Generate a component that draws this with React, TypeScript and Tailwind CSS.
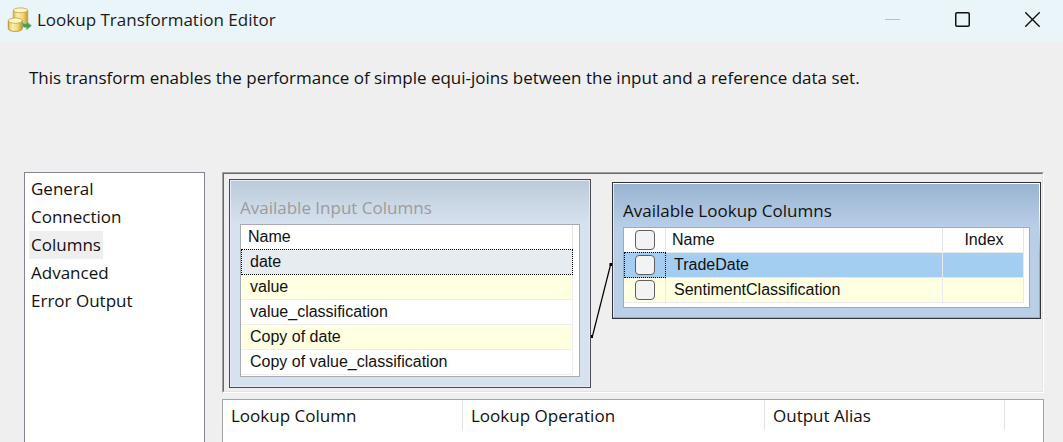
import React, { useState } from "react";

const pages = ["General", "Connection", "Columns", "Advanced", "Error Output"];
const inputColumns = ["date", "value", "value_classification", "Copy of date", "Copy of value_classification"];
const lookupColumns = ["TradeDate", "SentimentClassification"];

function DatabaseIcon() {
  return (
    <svg width="26" height="26" viewBox="0 0 26 26" aria-hidden="true" className="shrink-0">
      <defs>
        <linearGradient id="gold" x1="0" x2="1" y1="0" y2="0">
          <stop offset="0" stopColor="#e0b94c" />
          <stop offset="0.300" stopColor="#fbf0a8" />
          <stop offset="0.650" stopColor="#f3da72" />
          <stop offset="1" stopColor="#c9982f" />
        </linearGradient>
      </defs>
      <path d="M6.300 3.300v12c0 1.500 3 2.500 7.200 2.500s7.200-1 7.200-2.500v-12z" fill="url(#gold)" stroke="#b99545" strokeWidth="0.800" />
      <ellipse cx="13.500" cy="3.300" rx="7.200" ry="2.400" fill="#fcf5c4" stroke="#c4a04a" strokeWidth="0.800" />
      <path d="M1.300 13.600v8c0 1.700 3 2.800 7 2.800s7-1.100 7-2.800v-8z" fill="url(#gold)" stroke="#a97f2c" strokeWidth="0.800" />
      <ellipse cx="8.300" cy="13.600" rx="7" ry="2.700" fill="#fcf5c4" stroke="#c4a04a" strokeWidth="0.800" />
      <path d="M14.800 14.500c1 1.800 2.500 2.400 4.500 2.200v-2.500l5.400 4.600-5.400 4.300v-2.500c-3.500.3-5-2.200-4.500-6.100z" fill="#4f9d51" stroke="#a3cfa0" strokeWidth="0.600" />
    </svg>
  );
}

function TitleBar() {
  return (
    <header className="flex h-[42px] shrink-0 items-center bg-[#eaf5f9] pb-[3px] pl-[7px]">
      <DatabaseIcon />
      <h1 className="ml-1 flex-1 text-[17px] leading-6 text-[#1a1a1a]">Lookup Transformation Editor</h1>
      <div className="flex h-full items-center gap-[55px] pr-[23px]">
        <button aria-label="Minimize" disabled>
          <svg width="15" height="15" viewBox="0 0 15 15"><path d="M0 7.500h15" stroke="#b9c0c3" /></svg>
        </button>
        <button aria-label="Maximize">
          <svg width="15" height="15" viewBox="0 0 15 15" fill="none"><rect x="0.750" y="0.750" width="13.500" height="13.500" rx="1.200" stroke="#111" strokeWidth="1.500" /></svg>
        </button>
        <button aria-label="Close">
          <svg width="15" height="15" viewBox="0 0 15 15"><path d="M0.300 0.300l14.400 14.400M14.700 0.300L0.300 14.700" stroke="#111" strokeWidth="1.400" /></svg>
        </button>
      </div>
    </header>
  );
}

function CheckBox({ label }: { label: string }) {
  return (
    <input
      type="checkbox"
      aria-label={label}
      className="mx-auto block size-5 appearance-none rounded-[4px] border border-[#5f5f5f] bg-[#f3f3f3] checked:bg-[#0067c0]"
    />
  );
}

function InputColumns() {
  return (
    <section className="w-[362px] shrink-0 self-start border border-[#4a4a50] bg-[#d7e2f0]">
      <div className="border border-[#e6eaf6] bg-linear-to-b from-[#bccbda] to-[#d7e2f0] to-[44px] px-[9px] pt-[15px] pb-[9px]">
        <h2 className="h-[28px] text-[17px] leading-6 text-[#9c9c9c]">Available Input Columns</h2>
        <div className="border border-[#a9abb3] bg-white pr-[6px] pb-[1px]">
          <table className="w-full table-fixed border-separate border-spacing-0 font-['Liberation_Sans',Arial,sans-serif] text-[16px] leading-5">
            <thead>
              <tr>
                <th className="h-6 border-r border-[#e2e2e2] p-0 pl-[7px] text-left font-normal">Name</th>
              </tr>
            </thead>
            <tbody>
              {inputColumns.map((name, i) => (
                <tr key={name} className={i === 0 ? "bg-[#e6ecf0]" : i % 2 ? "bg-[#ffffe1]" : "bg-white"}>
                  <td className={i === 0 ? "h-[26px] border border-dotted border-black p-0 pl-2" : "h-[25px] border-r border-b border-[#eeeeee] p-0 pl-[9px]"}>
                    {name}
                  </td>
                </tr>
              ))}
            </tbody>
          </table>
        </div>
      </div>
    </section>
  );
}

function LookupColumns() {
  return (
    <section className="mt-[3px] mr-[1px] min-w-0 flex-1 self-start border border-[#333338] bg-linear-to-b from-white from-[25px] to-[#4ccdf0] to-[70px] pt-px pr-px pb-px">
      <div className="border-l border-[#dfe8f5] bg-linear-to-b from-[#9ab4d1] to-[#b9cfe8] to-[44px] px-[9px] pt-[15px] pb-[9px]">
        <h2 className="h-[28px] text-[17px] leading-6 text-[#111]">Available Lookup Columns</h2>
        <div className="border border-[#a3a9b5] bg-white pr-[5px] pb-[4px]">
          <table className="w-full table-fixed border-separate border-spacing-0 font-['Liberation_Sans',Arial,sans-serif] text-[16px] leading-5">
            <colgroup>
              <col className="w-[42px]" />
              <col />
              <col className="w-[81px]" />
            </colgroup>
            <thead>
              <tr>
                <th className="h-6 border-r border-[#e6e6e6] p-0"><CheckBox label="Select all lookup columns" /></th>
                <th className="border-r border-[#e6e6e6] p-0 pl-[6px] text-left font-normal">Name</th>
                <th className="border-r border-[#e6e6e6] p-0 pl-[2px] text-center font-normal">Index</th>
              </tr>
            </thead>
            <tbody>
              {lookupColumns.map((name, i) => (
                <tr key={name} className={i === 0 ? "bg-[#a3cef1]" : "bg-[#ffffe1]"}>
                  <td className={i === 0 ? "h-[26px] border border-dotted border-black p-0" : "h-[25px] border-r border-b border-[#e9e9e9] p-0"}>
                    <CheckBox label={name} />
                  </td>
                  <td className={i === 0 ? "border-y border-r border-[#e9e9e9] p-0 pl-2" : "border-r border-b border-[#e9e9e9] p-0 pl-2"}>{name}</td>
                  <td className={i === 0 ? "border-y border-r border-[#e9e9e9] p-0" : "border-r border-b border-[#e9e9e9] p-0"} />
                </tr>
              ))}
            </tbody>
          </table>
        </div>
      </div>
    </section>
  );
}

export default function App() {
  const [page, setPage] = useState("Columns");
  return (
    <div className="flex h-screen flex-col overflow-hidden bg-[#efefef] font-['Open_Sans','Segoe_UI',sans-serif] text-[17px] text-[#111]">
      <TitleBar />
      <p className="h-[130px] shrink-0 pt-6 pr-5 pl-[29px] leading-6">
        This transform enables the performance of simple equi-joins between the input and a reference data set.
      </p>
      <div className="flex min-h-0 flex-1 pr-[19px] pl-6">
        <nav className="mr-[17px] flex w-[181px] shrink-0 flex-col items-start border border-b-0 border-[#828790] bg-white pt-[2px] pl-1">
          {pages.map((name) => (
            <button
              key={name}
              onClick={() => setPage(name)}
              className={name === page ? "h-7 bg-[#efefef] px-[2px] text-left" : "h-7 px-[2px] text-left"}
            >
              {name}
            </button>
          ))}
        </nav>
        <main className="flex min-w-0 flex-1 flex-col">
          <div className="h-[221px] shrink-0 border border-t-[#a0a0a0] border-r-white border-b-white border-l-[#a0a0a0]">
            <div className="flex h-full border border-t-[#696969] border-r-[#e3e3e3] border-b-[#e3e3e3] border-l-[#696969] pt-[5px] pl-[5px]">
              <InputColumns />
              <svg width="21" height="209" viewBox="0 0 21 209" className="shrink-0" aria-hidden="true">
                <path d="M1.500 157L19.500 86" stroke="#000" strokeWidth="1.200" />
                <path d="M0 156h2v3H0zM18.500 84h2.500v3h-2.500z" fill="#000" />
              </svg>
              <LookupColumns />
            </div>
          </div>
          <div className="mt-[6px] min-h-0 flex-1 border border-b-0 border-[#a5a5a8] bg-white">
            <table className="w-full table-fixed border-separate border-spacing-0">
              <colgroup>
                <col className="w-[240px]" />
                <col className="w-[302px]" />
                <col className="w-[240px]" />
                <col />
              </colgroup>
              <thead>
                <tr>
                  {["Lookup Column", "Lookup Operation", "Output Alias"].map((name) => (
                    <th key={name} className="h-[30px] border-r border-[#e2e2e2] p-0 pt-[2px] pl-2 text-left leading-6 font-normal">{name}</th>
                  ))}
                  <td />
                </tr>
              </thead>
            </table>
          </div>
        </main>
      </div>
    </div>
  );
}
